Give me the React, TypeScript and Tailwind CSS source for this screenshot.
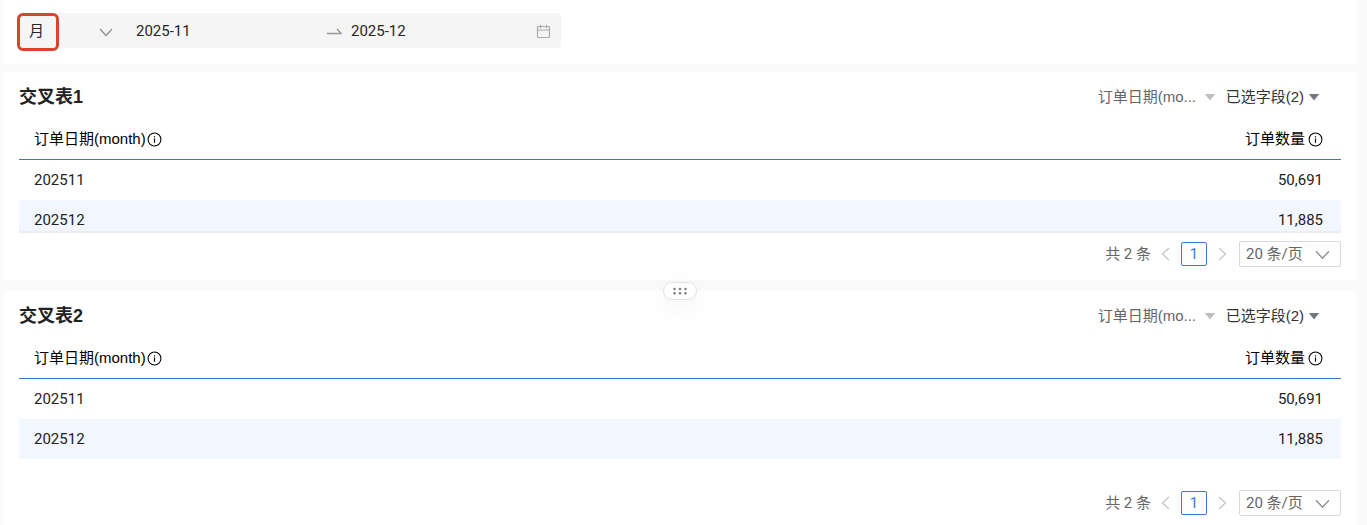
import React from "react";

const digits = "font-[Roboto,'Noto_Sans_CJK_SC',sans-serif]";
const arial = "font-['Liberation_Sans','Noto_Sans_CJK_SC',sans-serif]";

function Chevron({ className }: { className: string }) {
  return (
    <svg viewBox="0 0 14 14" fill="none" stroke="currentColor" aria-hidden="true" className={className}>
      <path d="M1 4l6 6.5L13 4" strokeWidth="1.2" />
    </svg>
  );
}

function Caret({ className }: { className: string }) {
  return (
    <svg viewBox="0 0 12 8" fill="currentColor" aria-hidden="true" className={className}>
      <path d="M0.8 1h10.4L6 7.5z" />
    </svg>
  );
}

function InfoIcon() {
  return (
    <svg viewBox="0 0 14 14" fill="none" stroke="currentColor" aria-hidden="true" className="size-[15px] shrink-0">
      <circle cx="7" cy="7" r="6" />
      <path d="M7 6v4M7 4v1.1" strokeWidth="1.1" />
    </svg>
  );
}

function FilterBar() {
  return (
    <header className="mr-[11px] ml-1 flex h-16 items-start bg-white pt-[13px] pl-[13px]">
      <div className="flex h-[35px] min-w-0 items-center rounded bg-[#f5f5f5] pt-0.5 text-[15px] text-[#262626]">
        <div className="grid w-[108px] items-center">
          <select
            aria-label="日期粒度"
            className="col-start-1 row-start-1 h-[38px] w-[108px] appearance-none bg-transparent pl-3 outline-none"
          >
            <option>月</option>
          </select>
          <span className="pointer-events-none col-start-1 row-start-1 h-[38px] w-[42px] rounded-md border-3 border-[#d9442e]" />
          <Chevron className="pointer-events-none col-start-1 row-start-1 mr-3 size-3.5 justify-self-end text-[#8c8c8c]" />
        </div>
        <div className="flex items-center pr-2.5 pl-[11px]">
          <input aria-label="开始月份" defaultValue="2025-11" className="w-[190px] bg-transparent outline-none" />
          <svg viewBox="0 0 16 16" fill="none" stroke="#999" aria-hidden="true" className="mr-[9px] size-4">
            <path d="M1 9.5h14L11 5" strokeWidth="1.4" />
          </svg>
          <input aria-label="结束月份" defaultValue="2025-12" className="w-[185px] bg-transparent outline-none" />
          <svg viewBox="0 0 15 15" fill="none" stroke="#aaa" aria-hidden="true" className="size-[15px]">
            <rect x="1.5" y="2.5" width="12" height="11" rx="0.8" strokeWidth="1.2" />
            <path d="M1.5 6h12M4.5 0.8v3.4M10.5 0.8v3.4" strokeWidth="1.2" />
          </svg>
        </div>
      </div>
    </header>
  );
}

function Pagination() {
  return (
    <nav aria-label="分页" className="flex h-[26px] items-center justify-end text-[15px] text-[#666]">
      <span>共 2 条</span>
      <button type="button" aria-label="上一页" disabled className="flex w-[30px] justify-center text-[#c4c4c4]">
        <Chevron className="size-3.5 rotate-90" />
      </button>
      <button
        type="button"
        aria-current="page"
        className="h-6 w-[26px] rounded-xs border border-[#3a78d4] text-center leading-[22px] text-[#3a78d4]"
      >
        1
      </button>
      <button type="button" aria-label="下一页" disabled className="flex w-[30px] justify-center text-[#c4c4c4]">
        <Chevron className="size-3.5 -rotate-90" />
      </button>
      <span className="ml-0.5 grid items-center">
        <select
          aria-label="每页条数"
          className="col-start-1 row-start-1 h-[26px] w-[102px] appearance-none rounded-xs border border-[#d9d9d9] bg-white pl-1.5 outline-none"
        >
          <option>20 条/页</option>
        </select>
        <Chevron className="pointer-events-none col-start-1 row-start-1 mr-[11px] size-[15px] justify-self-end text-[#8c8c8c]" />
      </span>
    </nav>
  );
}

const rows = [
  { month: "202511", count: "50,691" },
  { month: "202512", count: "11,885" },
];

function CrossTable({ label }: { label: string }) {
  return (
    <table aria-label={label} className="w-full border-separate border-spacing-0 text-[15px]">
      <thead className={`text-black ${arial}`}>
        <tr className="h-10">
          <th scope="col" className="border-b border-[#3f78c0] p-0 pl-[15px] text-left font-normal">
            <span className="flex items-center gap-px">
              订单日期(month)
              <InfoIcon />
            </span>
          </th>
          <th scope="col" className="border-b border-[#3f78c0] p-0 pr-[18px] font-normal">
            <span className="flex items-center justify-end gap-[3px]">
              订单数量
              <InfoIcon />
            </span>
          </th>
        </tr>
      </thead>
      <tbody className="text-[#222]">
        {rows.map((row) => (
          <tr key={row.month} className="h-10 even:bg-[#f2f6fe]">
            <td className="p-0 pl-[15px]">{row.month}</td>
            <td className="p-0 pr-[18px] text-right">{row.count}</td>
          </tr>
        ))}
      </tbody>
    </table>
  );
}

function PanelHeader({ title }: { title: string }) {
  return (
    <div className="flex h-12 items-center justify-between pt-0.5">
      <h2 className={`text-[18px] font-bold text-[#222] ${arial}`}>{title}</h2>
      <div className={`flex items-center gap-2.5 pr-[21px] text-[15px] ${arial}`}>
        <span className="grid items-center">
          <select
            aria-label="日期字段"
            className="col-start-1 row-start-1 w-[118px] appearance-none bg-transparent text-[#666] outline-none"
          >
            <option>订单日期(mo...</option>
          </select>
          <Caret className="pointer-events-none col-start-1 row-start-1 h-2 w-3 justify-self-end text-[#bfbfbf]" />
        </span>
        <button type="button" className="flex items-center gap-1 text-[#333]">
          已选字段(2)
          <Caret className="h-2 w-3 text-[#73777f]" />
        </button>
      </div>
    </div>
  );
}

export default function App() {
  return (
    <div className={`flex min-h-screen flex-col bg-[#fafafa] ${digits}`}>
      <FilterBar />
      <section className="mt-2 mr-[11px] ml-1 bg-white px-[15px] pb-[13px]">
        <PanelHeader title="交叉表1" />
        <div className="mb-2 h-[113px] overflow-hidden border-b-2 border-[#ebedf3]">
          <CrossTable label="交叉表1" />
        </div>
        <Pagination />
      </section>
      <div className="relative mr-[11px] ml-1 h-[11px]">
        <button
          type="button"
          aria-label="调整高度"
          className="absolute top-0.5 left-1/2 flex h-[18px] w-[34px] -translate-x-1/2 items-center justify-center rounded-full border border-[#e2e2e2] bg-white shadow-[0_6px_24px_rgba(0,0,0,0.06)]"
        >
          <svg viewBox="0 0 14 8" fill="#777" aria-hidden="true" className="h-2 w-3.5">
            <circle cx="1.5" cy="2" r="1.2" />
            <circle cx="7" cy="2" r="1.2" />
            <circle cx="12.5" cy="2" r="1.2" />
            <circle cx="1.5" cy="6.3" r="1.2" />
            <circle cx="7" cy="6.3" r="1.2" />
            <circle cx="12.5" cy="6.3" r="1.2" />
          </svg>
        </button>
      </div>
      <section className="mr-[11px] ml-1 flex-1 bg-white px-[15px] pb-2">
        <PanelHeader title="交叉表2" />
        <div className="mb-[31px]">
          <CrossTable label="交叉表2" />
        </div>
        <Pagination />
      </section>
    </div>
  );
}
